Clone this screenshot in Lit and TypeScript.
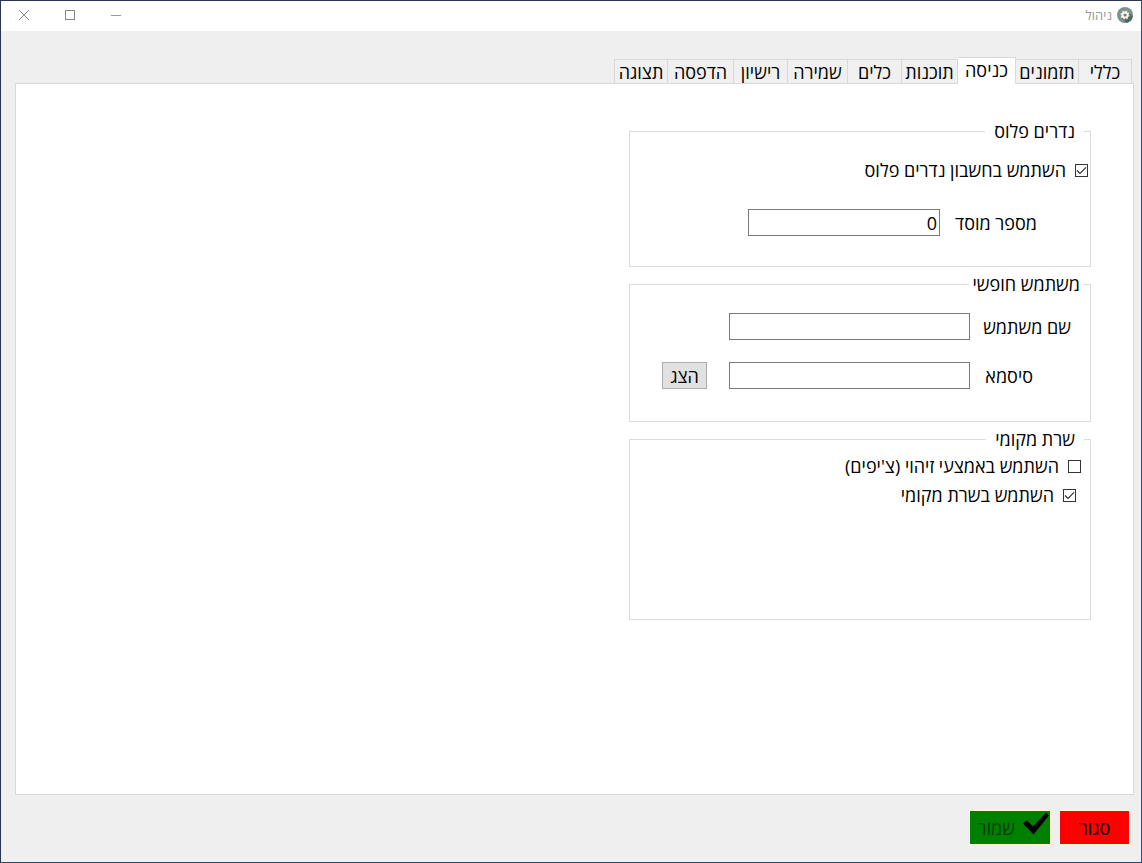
import { LitElement, html, css, svg } from "lit";
import { customElement, state } from "lit/decorators.js";
import { classMap } from "lit/directives/class-map.js";

const TABS = ["כללי", "תזמונים", "כניסה", "תוכנות", "כלים", "שמירה", "רישיון", "הדפסה", "תצוגה"];

@customElement("app-root")
export class AppRoot extends LitElement {
  @state() private active = 2;

  static styles = css`
    :host {
      display: block;
      direction: rtl;
      font-family: "Open Sans", "Noto Sans", "Liberation Sans", sans-serif;
      font-size: 18px;
      line-height: 20px;
      color: #000;
    }
    * {
      box-sizing: border-box;
    }
    .window {
      display: flex;
      flex-direction: column;
      min-height: 100vh;
      background: #efefef;
      border: 1px solid #26374f;
      border-right-color: #2a5478;
      border-bottom-color: #2a4a6c;
    }
    .titlebar {
      display: flex;
      align-items: center;
      justify-content: space-between;
      height: 30px;
      padding: 0 8px 2px 0;
      background: #fff;
    }
    .title {
      display: flex;
      align-items: center;
      gap: 5px;
      margin: 0;
      font-size: 13px;
      font-weight: 400;
      color: #999;
    }
    .title svg,
    .winbtn svg {
      display: block;
    }
    .controls {
      display: flex;
    }
    .winbtn {
      display: flex;
      align-items: center;
      justify-content: center;
      width: 46px;
      height: 28px;
      padding: 0;
      border: 0;
      background: none;
    }
    .tabs {
      display: grid;
      grid-template-columns: 53px 63px 58px 56px 54px 60px 54px 66px 54px;
      align-items: end;
      height: 27px;
      margin: 26px 9px -1px 0;
      z-index: 1;
    }
    .tab {
      height: 25px;
      padding: 0;
      border: 1px solid #d9d9d9;
      border-left-width: 0;
      background: #f0f0f0;
      font: inherit;
      color: inherit;
      white-space: nowrap;
    }
    .tab:last-child {
      border-left-width: 1px;
    }
    .tab.active {
      height: 27px;
      padding-bottom: 2px;
      border-bottom: 0;
      background: #fff;
    }
    .panel {
      flex: 1;
      margin: 0 7px 0 14px;
      padding: 37px 42px 24px;
      background: #fff;
      border: 1px solid #d9d9d9;
    }
    .groups {
      display: flex;
      flex-direction: column;
      gap: 7px;
      max-width: 462px;
    }
    fieldset {
      min-width: 0;
      margin: 0;
      padding: 0;
      border: 1px solid #dcdcdc;
    }
    legend {
      margin-right: 6px;
      padding: 0 9px;
    }
    legend.tight {
      padding: 0 4px;
    }
    .account {
      height: 146px;
    }
    .user {
      height: 148px;
    }
    .server {
      height: 191px;
    }
    .check {
      display: flex;
      align-items: center;
      gap: 9px;
      width: fit-content;
    }
    .account .check {
      margin: 19px 2px 0 0;
    }
    .server .check {
      margin: 7px 9px 0 0;
    }
    .server .check + .check {
      margin: 9px 14px 0 0;
    }
    input[type="checkbox"] {
      appearance: none;
      width: 13px;
      height: 13px;
      margin: 0;
      border: 1px solid #333;
      background: #fff;
    }
    input[type="checkbox"]:checked {
      background: #fff
        url("data:image/svg+xml,%3Csvg xmlns='http://www.w3.org/2000/svg' viewBox='0 0 11 11'%3E%3Cpath d='M1 5.5l3 3L10 2.3' fill='none' stroke='%23333' stroke-width='1.2'/%3E%3C/svg%3E");
    }
    .field {
      display: flex;
      align-items: center;
    }
    .field input {
      height: 27px;
      padding: 0 2px;
      border: 1px solid #7a7a7a;
      border-radius: 0;
      background: #fff;
      font: inherit;
      color: inherit;
    }
    .account .field {
      margin: 29px 53px 0 0;
    }
    .account .field label {
      width: 97px;
    }
    .account .field input {
      width: 192px;
    }
    .user .field {
      margin: 19px 19px 0 0;
    }
    .user .field + .field {
      margin-top: 22px;
    }
    .user .field label {
      width: 101px;
    }
    .user .field .inset {
      padding-right: 38px;
    }
    .user .field input {
      width: 241px;
    }
    .show {
      width: 45px;
      height: 27px;
      margin-right: 22px;
      padding: 0;
      border: 1px solid #adadad;
      background: #e1e1e1;
      font: inherit;
      color: inherit;
    }
    .footer {
      display: flex;
      gap: 8px;
      padding: 15px 11px 17px;
    }
    .action {
      display: flex;
      align-items: center;
      justify-content: center;
      height: 35px;
      padding: 0;
      border: 1px solid #ffffc8;
      font: inherit;
    }
    .close {
      width: 71px;
      background: #f00;
      color: #000;
    }
    .save {
      justify-content: flex-start;
      gap: 7px;
      width: 82px;
      background: #008000;
      color: #003c00;
    }
    .save svg {
      align-self: flex-start;
    }
  `;

  private gear() {
    return svg`<svg width="16" height="16" viewBox="0 0 16 16" aria-hidden="true">
      <circle cx="8" cy="8" r="8" fill="#7b9290"/>
      <path d="M11.2 5L15.8 9.6A8 8 0 0 1 9.5 15.9L5 11.2z" fill="#526866"/>
      <circle cx="8" cy="8" r="2.6" fill="none" stroke="#fff8e6" stroke-width="2"/>
      <circle cx="8" cy="8" r="3.9" fill="none" stroke="#fff8e6" stroke-width="1.2" stroke-dasharray="1.53 1.53"/>
    </svg>`;
  }

  render() {
    return html`
      <div class="window">
        <header class="titlebar">
          <h1 class="title">${this.gear()}<span>ניהול</span></h1>
          <div class="controls">
            <button class="winbtn" aria-label="מזער">
              <svg width="10" height="10"><path d="M0 5.5H10" stroke="#999" /></svg>
            </button>
            <button class="winbtn" aria-label="הגדל">
              <svg width="10" height="10"><rect x=".5" y=".5" width="9" height="9" fill="none" stroke="#888" /></svg>
            </button>
            <button class="winbtn" aria-label="סגור חלון">
              <svg width="10" height="10"><path d="M0 0L10 10M10 0L0 10" stroke="#888" /></svg>
            </button>
          </div>
        </header>
        <div class="tabs" role="tablist">
          ${TABS.map(
            (name, i) => html`<button
              role="tab"
              class=${classMap({ tab: true, active: i === this.active })}
              aria-selected=${i === this.active}
              @click=${() => (this.active = i)}
            >${name}</button>`
          )}
        </div>
        <main class="panel">
          <div class="groups">
            <fieldset class="account">
              <legend>נדרים פלוס</legend>
              <label class="check"><input type="checkbox" checked />השתמש בחשבון נדרים פלוס</label>
              <div class="field">
                <label for="org">מספר מוסד</label>
                <input id="org" type="text" value="0" />
              </div>
            </fieldset>
            <fieldset class="user">
              <legend class="tight">משתמש חופשי</legend>
              <div class="field">
                <label for="name">שם משתמש</label>
                <input id="name" type="text" />
              </div>
              <div class="field">
                <label class="inset" for="pass">סיסמא</label>
                <input id="pass" type="password" />
                <button class="show">הצג</button>
              </div>
            </fieldset>
            <fieldset class="server">
              <legend>שרת מקומי</legend>
              <label class="check"><input type="checkbox" />השתמש באמצעי זיהוי (צ'יפים)</label>
              <label class="check"><input type="checkbox" checked />השתמש בשרת מקומי</label>
            </fieldset>
          </div>
        </main>
        <footer class="footer">
          <button class="action close">סגור</button>
          <button class="action save">
            <svg width="28" height="26" viewBox="0 0 28 26" aria-hidden="true">
              <path d="M1 12.5L4.5 9L11 15.5L24 1.5L27 4.5L11.5 23.5z" fill="#000" />
            </svg>
            <span>שמור</span>
          </button>
        </footer>
      </div>
    `;
  }
}
